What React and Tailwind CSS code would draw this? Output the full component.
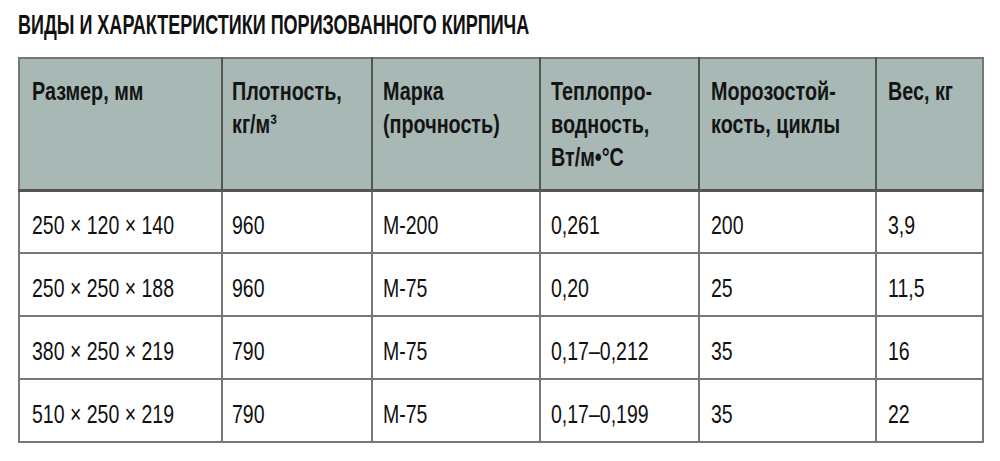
export default function App() {
  const rows = [
    ["250 × 120 × 140", "960", "М-200", "0,261", "200", "3,9"],
    ["250 × 250 × 188", "960", "М-75", "0,20", "25", "11,5"],
    ["380 × 250 × 219", "790", "М-75", "0,17–0,212", "35", "16"],
    ["510 × 250 × 219", "790", "М-75", "0,17–0,199", "35", "22"],
  ];
  const headers = [
    ["Размер, мм"],
    ["Плотность,", "кг/м³"],
    ["Марка", "(прочность)"],
    ["Теплопро-", "водность,", "Вт/м•°С"],
    ["Морозостой-", "кость, циклы"],
    ["Вес, кг"],
  ];
  const widths = ["w-[203px]", "w-[150px]", "w-[168px]", "w-[159px]", "w-[177px]", "w-[107px]"];
  const pads = ["pl-[12px]", "pl-[9px]", "pl-[10px]", "pl-[10px]", "pl-[11px]", "pl-[11px]"];
  const font = { fontFamily: '"Liberation Sans", Arial, sans-serif' };
  return (
    <div className="w-[1000px] h-[461px] bg-white text-[#111]" style={font}>
      <div className="pt-[10px] pl-[18px] h-[57px]">
        <h1 className="inline-block text-[27px] font-bold leading-[30px] origin-left scale-x-[0.667] whitespace-nowrap">
          ВИДЫ И ХАРАКТЕРИСТИКИ ПОРИЗОВАННОГО КИРПИЧА
        </h1>
      </div>
      <table className="ml-[18px] border-collapse border-2 border-[#777] table-fixed w-[964px]">
        <thead>
          <tr className="h-[132px] bg-[#a7b8b5] border-b-[3px] border-[#555]">
            {headers.map((h, j) => (
              <th
                key={j}
                className={`${widths[j]} ${pads[j]} align-top text-left font-bold text-[26px] leading-[33px] pt-[16px] text-[#141414] ${j < 5 ? "border-r-2 border-[#555]" : ""}`}
              >
                {h.map((line, k) => (
                  <div key={k} className="whitespace-nowrap h-[33px]">
                    <span className="inline-block origin-left scale-x-[0.76]">{line}</span>
                  </div>
                ))}
              </th>
            ))}
          </tr>
        </thead>
        <tbody>
          {rows.map((r, i) => (
            <tr key={i} className="h-[63px] border-b-2 border-[#777]">
              {r.map((c, j) => (
                <td
                  key={j}
                  className={`${pads[j]} text-left align-middle text-[26px] leading-[28px] pt-[7px] ${j < 5 ? "border-r-2 border-[#777]" : ""}`}
                >
                  <span className="inline-block whitespace-nowrap origin-left scale-x-[0.75]">{c}</span>
                </td>
              ))}
            </tr>
          ))}
        </tbody>
      </table>
    </div>
  );
}
